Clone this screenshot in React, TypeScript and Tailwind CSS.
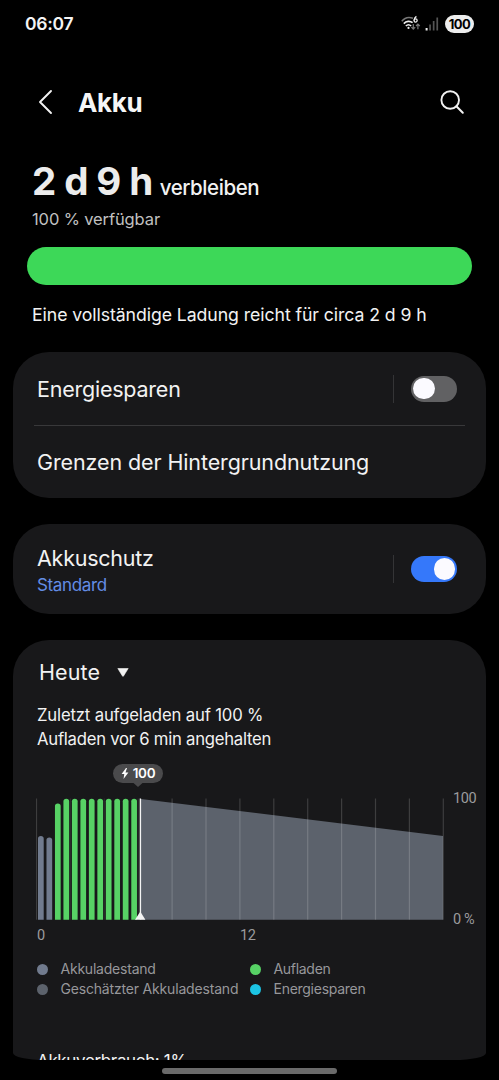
import React from "react";

const GRID_LINES = Array.from({ length: 13 }, (_, i) => 0.5 + i * 33.9);

const BARS = [
  { top: 38, charging: false },
  { top: 39.5, charging: false },
  { top: 5.5, charging: true },
  ...Array.from({ length: 9 }, () => ({ top: 0.7, charging: true })),
];

function StatusBar() {
  return (
    <div className="flex h-12 shrink-0 items-center justify-between pl-[25px] pr-[25px]">
      <span className="text-[17.5px] font-semibold leading-none tracking-[-0.25px] text-[#f4f4f4]">06:07</span>
      <div className="flex items-center">
        <svg width="20" height="18" viewBox="0 0 20 18" fill="none" className="mr-[4px]">
          <path d="M0.8 6.2C3.5 2.8 8 1.7 12 3.2" stroke="#777" strokeWidth="1.5" />
          <path d="M2.8 8.6C5.2 6 9 5.6 11.6 7.7" stroke="#eee" strokeWidth="1.6" />
          <path d="M4.8 11C6.3 9.5 8.6 9.5 10.2 11" stroke="#eee" strokeWidth="1.5" />
          <circle cx="7.5" cy="12.9" r="1.1" fill="#eee" />
          <path d="M15.4 1.4C13.9 2.4 13.1 3.8 13.1 5.4" stroke="#eee" strokeWidth="1.3" />
          <circle cx="14.6" cy="5.5" r="1.55" stroke="#eee" strokeWidth="1.3" />
          <path d="M12.3 9v5M10.4 12.2l1.9 1.9 1.9-1.9M16.9 14.2v-5M15 11l1.9-1.9 1.9 1.9" stroke="#777" strokeWidth="1.2" />
        </svg>
        <svg width="14" height="14" viewBox="0 0 14 14" className="mr-[6px]">
          <rect x="0.6" y="11" width="2" height="2.5" fill="#eee" />
          <rect x="4.2" y="7.5" width="1.7" height="6" fill="#555" />
          <rect x="7.8" y="4" width="1.7" height="9.5" fill="#555" />
          <rect x="11.4" y="0.5" width="1.7" height="13" fill="#555" />
        </svg>
        <span className="flex h-[18px] w-[29px] items-center justify-center rounded-full bg-[#ededed] text-[13px] font-bold leading-none tracking-[-0.5px] text-black">
          100
        </span>
      </div>
    </div>
  );
}

function Header() {
  return (
    <header className="flex h-[108px] shrink-0 items-center pl-[38px] pr-[34px]">
      <svg width="15" height="26" viewBox="0 0 15 26" fill="none" className="mr-[25px]">
        <path d="M13 2 2 13 13 24" stroke="#f2f2f2" strokeWidth="1.9" strokeLinecap="round" strokeLinejoin="round" />
      </svg>
      <h1 className="flex-1 pt-px text-[26px] font-bold leading-8 tracking-[-0.4px] text-[#f6f6f6]">Akku</h1>
      <svg width="26" height="26" viewBox="0 0 26 26" fill="none">
        <circle cx="11.2" cy="11" r="8.8" stroke="#f2f2f2" strokeWidth="1.9" />
        <path d="m17.4 17.3 6.4 6.4" stroke="#f2f2f2" strokeWidth="2" strokeLinecap="round" />
      </svg>
    </header>
  );
}

function Toggle({ on }: { on: boolean }) {
  return (
    <div className="flex items-center gap-[17px]">
      <span className="h-7 w-px bg-[#343436]" />
      <span
        className={
          on
            ? "flex h-[26px] w-[46px] items-center justify-end rounded-full bg-[#3578fa] px-[2px]"
            : "flex h-[26px] w-[46px] items-center justify-start rounded-full bg-[#616163] px-[2px]"
        }
      >
        <span className="size-[21.5px] rounded-full bg-[#fbfaff]" />
      </span>
    </div>
  );
}

function BatteryChart() {
  return (
    <div className="ml-[23px] mt-[13px] flex shrink-0 flex-col">
      <div className="ml-[77px] flex w-[50px] flex-col items-center">
        <div className="flex h-[19px] w-full items-center justify-center gap-[4px] rounded-full bg-[#4a4a4c]">
          <svg width="8" height="11" viewBox="0 0 8 11">
            <path d="M5 0 0.6 6h2.7L2.5 11 7.4 4.5H4.5L6 0Z" fill="#fff" />
          </svg>
          <span className="text-[13.5px] font-semibold leading-none tracking-[-0.3px] text-white">100</span>
        </div>
        <svg width="10" height="4" viewBox="0 0 10 4">
          <path d="M0.5 0h9L5 4Z" fill="#4a4a4c" />
        </svg>
      </div>
      <div className="mt-[11px] flex">
        <svg width="408" height="122" viewBox="0 0 408 122">
          <path d="M105 1 407 38v83.7H105Z" fill="#5c626c" />
          {GRID_LINES.map((x, i) => (
            <rect key={x} x={x - 0.6} y="0.5" width="1.2" height="121.2" fill="#fff" opacity={i === 1 || i === 2 || i === 3 ? 0.08 : 0.16} />
          ))}
          {BARS.map((bar, i) => {
            const x = 2 + i * 8.48;
            return (
              <path
                key={i}
                d={`M${x} 121.7V${bar.top + 2.6}a2.85 2.6 0 0 1 5.7 0V121.7Z`}
                fill={bar.charging ? "#57d265" : "#717b8e"}
              />
            );
          })}
          <rect x="103.7" y="0.5" width="1.4" height="121" fill="#f4f4f4" />
          <path d="M99 121.7h10.4L104.6 114h-.6Z" fill="#f4f4f4" />
        </svg>
        <div className="ml-[9px] flex h-[129px] flex-col justify-between font-[Roboto,sans-serif] text-[14.5px] leading-[15px] tracking-[-0.4px] text-[#9b9b9d]">
          <span className="-mt-[7px]">100</span>
          <span>0 %</span>
        </div>
      </div>
      <div className="mt-[1px] flex pl-px font-[Roboto,sans-serif] text-[14.5px] leading-[15px] tracking-[-0.3px] text-[#9b9b9d]">
        <span className="w-[203px]">0</span>
        <span>12</span>
      </div>
    </div>
  );
}

function LegendItem({ dot, label, track }: { dot: string; label: string; track: string }) {
  return (
    <div className="flex h-5 items-center gap-[12.5px]">
      <span className={`size-[11px] shrink-0 rounded-full ${dot}`} />
      <span className={`whitespace-nowrap text-[14px] leading-5 text-[#97979a] ${track}`}>{label}</span>
    </div>
  );
}

export default function App() {
  return (
    <div className="flex h-[1080px] w-[499px] flex-col overflow-hidden bg-black font-[Inter,sans-serif] text-[#f2f2f2]">
      <StatusBar />
      <Header />

      <section className="flex h-[196px] shrink-0 flex-col">
        <div className="flex h-[51px] items-end gap-[7px] whitespace-nowrap pl-[32px]">
          <span className="text-[38.5px] font-bold leading-[52px] tracking-[-0.6px] text-[#ececec]">2 d 9 h</span>
          <span className="text-[20.5px] font-medium leading-[38px] tracking-[-0.42px]">verbleiben</span>
        </div>
        <p className="mt-[2px] pl-[32px] text-[16.5px] leading-5 tracking-[-0.12px] text-[#c0c0c0]">100 % verfügbar</p>
        <div className="mx-[27px] mt-[18px] h-[38px] shrink-0 rounded-full bg-[#3dd858]" />
        <p className="mt-[18px] whitespace-nowrap pl-[32px] text-[17.7px] leading-6 tracking-[-0.08px]">
          Eine vollständige Ladung reicht für circa 2 d 9 h
        </p>
      </section>

      <section className="mx-[13px] flex h-[145.5px] shrink-0 flex-col rounded-[36px] bg-[#18181a]">
        <div className="flex h-[73px] items-center justify-between pl-6 pr-[29px]">
          <span className="pt-px text-[21.5px] leading-[30px] tracking-[-0.23px]">Energiesparen</span>
          <Toggle on={false} />
        </div>
        <div className="mx-[21px] h-px shrink-0 bg-[#38383a]" />
        <div className="flex flex-1 items-center pl-6">
          <span className="pt-px text-[21.5px] leading-[30px] tracking-[-0.11px]">Grenzen der Hintergrundnutzung</span>
        </div>
      </section>

      <section className="mx-[13px] mt-[26.5px] flex h-[90px] shrink-0 items-center justify-between rounded-[36px] bg-[#18181a] pl-6 pr-[29px]">
        <div className="flex flex-col pt-[2px]">
          <span className="text-[21.5px] leading-[30px] tracking-[-0.25px]">Akkuschutz</span>
          <span className="text-[17px] leading-6 tracking-[-0.35px] text-[#648de5]">Standard</span>
        </div>
        <Toggle on />
      </section>

      <section className="mx-[13px] mt-[26px] flex h-[420px] shrink-0 flex-col overflow-hidden rounded-b-[32px_7px] rounded-t-[36px] bg-[#18181a]">
        <div className="ml-[26px] mt-[16px] flex h-8 shrink-0 items-center gap-[17px]">
          <span className="text-[21.5px] leading-8 tracking-[0.1px]">Heute</span>
          <svg width="12" height="9" viewBox="0 0 12 9">
            <path d="M0.8 0.5h10.4L6.4 8.2h-.8Z" fill="#f2f2f2" stroke="#f2f2f2" strokeWidth="0.6" strokeLinejoin="round" />
          </svg>
        </div>
        <div className="ml-6 mt-[16px] flex shrink-0 flex-col text-[16.7px] leading-[23.5px]">
          <span className="tracking-[-0.16px]">Zuletzt aufgeladen auf 100 %</span>
          <span className="tracking-[-0.25px]">Aufladen vor 6 min angehalten</span>
        </div>
        <BatteryChart />
        <div className="ml-6 mt-[16px] flex shrink-0">
          <div className="w-[213px]">
            <LegendItem dot="bg-[#717b8e]" label="Akkuladestand" track="tracking-[-0.22px]" />
            <LegendItem dot="bg-[#5c626c]" label="Geschätzter Akkuladestand" track="tracking-[-0.18px]" />
          </div>
          <div>
            <LegendItem dot="bg-[#57d265]" label="Aufladen" track="tracking-[-0.3px]" />
            <LegendItem dot="bg-[#1cc4e4]" label="Energiesparen" track="tracking-[-0.27px]" />
          </div>
        </div>
        <p className="ml-6 mt-[49.5px] shrink-0 whitespace-nowrap text-[17px] leading-6 tracking-[-0.35px]">Akkuverbrauch: 1%</p>
      </section>

      <div className="mx-auto mt-[7.5px] h-[6px] w-[175px] shrink-0 rounded-full bg-[#6a6a6a]" />
    </div>
  );
}
